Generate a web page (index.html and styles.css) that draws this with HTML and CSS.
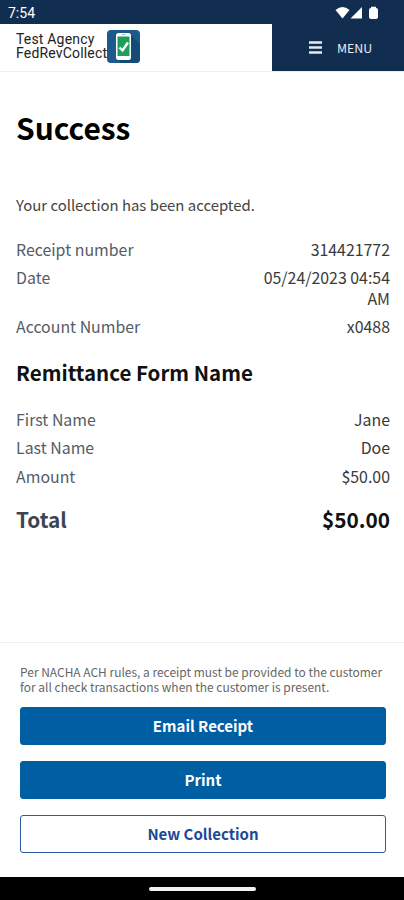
FILE: index.html
```
<!DOCTYPE html>
<html lang="en">
<head>
    <meta charset="UTF-8">
    <meta name="viewport" content="width=device-width, initial-scale=1.0">
    <title>Collection Receipt</title>
    <link rel="stylesheet" href="styles.css">
</head>
<body>

<div class="status">
    <span class="time">7:54</span>
    <svg class="status-icons" width="46" height="16" viewBox="0 0 46 16">
        <path d="M0.5 5 Q7.5 -1 14.5 5 L7.5 13.5 Z" fill="#fff"/>
        <path d="M15.5 13.5 L27 2 V13.5 Z" fill="#fff"/>
        <path d="M36 3 V1.8 H41 V3 Q43 3 43 5 V12 Q43 14 41 14 H36 Q34 14 34 12 V5 Q34 3 36 3 Z" fill="#fff"/>
    </svg>
</div>

<header class="header">
    <div class="brand">
        <div class="brand-name">
            <div>Test Agency</div>
            <div>FedRevCollect</div>
        </div>
        <svg class="logo" width="33" height="33" viewBox="0 0 33 33">
            <rect width="33" height="33" rx="4" fill="#1d5a8b"/>
            <path d="M23 4 L33 14 V29 Q33 33 29 33 H14 L9 28 L23 27 Z" fill="#164a76"/>
            <rect x="9" y="3" width="15" height="27" rx="2.5" fill="#fff"/>
            <rect x="10.5" y="6.5" width="12" height="19.5" fill="#1e9d5b"/>
            <path d="M14.5 4.7 H18.5" stroke="#9db5c6" stroke-width="1"/>
            <path d="M12.5 17.5 L15.5 20.5 L21 12.5" fill="none" stroke="#fff" stroke-width="2.4"/>
        </svg>
    </div>
    <button class="menu">
        <svg width="13" height="13" viewBox="0 0 13 13">
            <path d="M0 1.5 H13 M0 6.5 H13 M0 11.5 H13" stroke="#e6eaf0" stroke-width="2.4"/>
        </svg>
        <span>MENU</span>
    </button>
</header>

<main class="content">
    <h1>Success</h1>
    <p class="message">Your collection has been accepted.</p>

    <dl class="details">
        <div class="row"><dt>Receipt number</dt><dd>314421772</dd></div>
        <div class="row"><dt>Date</dt><dd>05/24/2023 04:54 AM</dd></div>
        <div class="row"><dt>Account Number</dt><dd>x0488</dd></div>
    </dl>

    <h2>Remittance Form Name</h2>

    <dl class="details">
        <div class="row"><dt>First Name</dt><dd>Jane</dd></div>
        <div class="row"><dt>Last Name</dt><dd>Doe</dd></div>
        <div class="row"><dt>Amount</dt><dd>$50.00</dd></div>
        <div class="row total"><dt>Total</dt><dd>$50.00</dd></div>
    </dl>
</main>

<footer class="actions">
    <p class="note">Per NACHA ACH rules, a receipt must be provided to the customer<br>for all check transactions when the customer is present.</p>
    <button class="btn">Email Receipt</button>
    <button class="btn">Print</button>
    <button class="btn outline">New Collection</button>
</footer>

<div class="navbar"><span class="handle"></span></div>

</body>
</html>
```
FILE: styles.css
```
* {
    box-sizing: border-box;
}

body {
    margin: 0;
    height: 900px;
    display: flex;
    flex-direction: column;
    background-color: #fff;
    color: #1b1b1b;
    font-family: "Noto Sans CJK SC", "Open Sans", sans-serif;
    overflow: hidden;
}

h1, h2, p, dl, dd {
    margin: 0;
}

button {
    font-family: inherit;
    padding: 0;
    cursor: pointer;
}

.status {
    height: 24px;
    flex: none;
    display: flex;
    align-items: center;
    justify-content: space-between;
    padding: 2px 23px 0 8px;
    background-color: #112e51;
    color: #fff;
}

.time {
    font: 400 14px/16px Roboto, sans-serif;
}

.header {
    height: 48px;
    flex: none;
    display: flex;
    justify-content: space-between;
    border-bottom: 1px solid #ececec;
}

.brand {
    display: flex;
    align-items: flex-start;
    padding: 6px 0 0 16px;
}

.brand-name {
    width: 91px;
    padding-top: 3px;
    color: #222;
    font: 400 14px/13.5px Roboto, sans-serif;
    letter-spacing: 0.18px;
    white-space: nowrap;
}

.menu {
    width: 132px;
    display: flex;
    align-items: center;
    gap: 15px;
    padding-left: 37px;
    border: 0;
    background-color: #112e51;
    color: #e6eaf0;
    font-size: 12.4px;
}

.content {
    flex: 1;
    padding: 35px 14px 0 16px;
}

h1 {
    color: #000;
    font-size: 29.9px;
    line-height: 40px;
}

.message {
    margin-top: 48px;
    color: #444;
    font-size: 14.9px;
    line-height: 20px;
}

.details {
    color: #565c65;
    font-size: 15.9px;
    line-height: 20.3px;
}

.message + .details {
    margin-top: 25px;
}

.row {
    display: flex;
    justify-content: space-between;
    margin-bottom: 8px;
}

.row dd {
    max-width: 140px;
    color: #3a3a3a;
    text-align: right;
}

h2 {
    margin: 21px 0 24px;
    color: #111;
    font-size: 20.5px;
    line-height: 28px;
}

.total {
    margin-top: 18px;
    font-size: 20.8px;
    line-height: 28px;
    font-weight: bold;
    color: #3d4551;
}

.total dd {
    color: #111;
}

.actions {
    height: 235px;
    flex: none;
    display: flex;
    flex-direction: column;
    gap: 16px;
    padding: 21px 18px 0 20px;
    border-top: 1px solid #eee;
}

.note {
    margin-bottom: -4px;
    color: #666;
    font-size: 11.97px;
    line-height: 15.3px;
    white-space: nowrap;
}

.btn {
    height: 38px;
    flex: none;
    border: 1px solid #005ea2;
    border-radius: 3px;
    background-color: #005ea2;
    color: #fff;
    font-size: 15px;
    font-weight: bold;
    line-height: 20px;
}

.outline {
    background-color: #fff;
    border-color: #2c5ba0;
    color: #1a4a95;
}

.navbar {
    height: 23px;
    flex: none;
    display: flex;
    align-items: center;
    justify-content: center;
    background-color: #000;
}

.handle {
    width: 107px;
    height: 4px;
    border-radius: 2px;
    background-color: #f2f2f2;
}
```
